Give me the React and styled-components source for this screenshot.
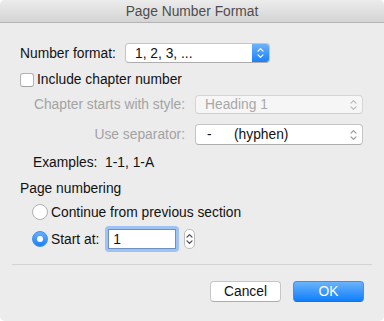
import React from "react";
import styled, { createGlobalStyle, css } from "styled-components";

const GlobalStyle = createGlobalStyle`
  html, body {
    margin: 0;
    padding: 0;
    background: #ffffff;
  }
  body {
    font-family: "Liberation Sans", Arial, sans-serif;
    font-size: 13.8px;
    color: #1a1a1a;
  }
`;

const Chevrons = ({ color = "#fff", size = 9 }) => (
  <svg width={size - 2} height={size + 3} viewBox="0 0 7 12" fill="none">
    <path d="M1 4.2 L3.5 1.7 L6 4.2" stroke={color} strokeWidth="1.2" strokeLinecap="round" strokeLinejoin="round" />
    <path d="M1 7.8 L3.5 10.3 L6 7.8" stroke={color} strokeWidth="1.2" strokeLinecap="round" strokeLinejoin="round" />
  </svg>
);

const App = () => {
  return (
    <>
      <GlobalStyle />
      <Window>
        <TitleBar>Page Number Format</TitleBar>
        <Content>
          <Row $top={20}>
            <Label $width={105}>Number format:</Label>
            <Popup $width={145}>
              <PopupText>1, 2, 3, ...</PopupText>
              <BlueArrows>
                <Chevrons />
              </BlueArrows>
            </Popup>
          </Row>

          <Row $top={9}>
            <Checkbox />
            <CheckLabel>Include chapter number</CheckLabel>
          </Row>

          <Row $top={8}>
            <Label $width={165} $right $disabled>Chapter starts with style:</Label>
            <Popup $width={168} $disabled $height={19}>
              <PopupText $disabled>Heading 1</PopupText>
              <PlainArrows>
                <Chevrons color="#b8b8b8" />
              </PlainArrows>
            </Popup>
          </Row>

          <Row $top={10}>
            <Label $width={165} $right $disabled>Use separator:</Label>
            <Popup $width={168} $height={21}>
              <PopupText>
                <Hyphen>-</Hyphen>(hyphen)
              </PopupText>
              <PlainArrows>
                <Chevrons color="#9a9a9a" />
              </PlainArrows>
            </Popup>
          </Row>

          <Examples>Examples:&nbsp;&nbsp;1-1, 1-A</Examples>

          <SectionTitle>Page numbering</SectionTitle>

          <RadioRow $top={7}>
            <Radio />
            <RadioLabel>Continue from previous section</RadioLabel>
          </RadioRow>

          <RadioRow $top={6}>
            <Radio $checked />
            <RadioLabel>Start at:</RadioLabel>
            <FocusRing>
              <NumberInput>1</NumberInput>
            </FocusRing>
            <Stepper>
              <Chevrons color="#444" />
            </Stepper>
          </RadioRow>
        </Content>

        <Divider />

        <Buttons>
          <Button>Cancel</Button>
          <Button $primary>OK</Button>
        </Buttons>
      </Window>
    </>
  );
};

export default App;

const Window = styled.div`
  width: 384px;
  height: 321px;
  box-sizing: border-box;
  background: #ececec;
  border-radius: 5px;
  overflow: hidden;
  display: flex;
  flex-direction: column;
`;

const TitleBar = styled.div`
  height: 21px;
  flex: none;
  border-bottom: 1px solid #b4b4b4;
  background: linear-gradient(#ececec, #d4d4d4);
  color: #4d4d4d;
  display: flex;
  align-items: center;
  justify-content: center;
  padding-top: 1px;
  box-sizing: content-box;
`;

const Content = styled.div`
  display: flex;
  flex-direction: column;
  padding: 0 20px;
`;

const Row = styled.div`
  display: flex;
  align-items: center;
  margin-top: ${(p) => p.$top}px;
`;

const Label = styled.div`
  width: ${(p) => p.$width}px;
  flex: none;
  box-sizing: border-box;
  white-space: nowrap;
  color: ${(p) => (p.$disabled ? "#a3a3a3" : "#111")};
  ${(p) =>
    p.$right &&
    css`
      text-align: right;
      padding-right: 10px;
      width: ${p.$width + 10}px;
    `}
`;

const Popup = styled.div`
  width: ${(p) => p.$width}px;
  height: ${(p) => p.$height || 20}px;
  box-sizing: border-box;
  display: flex;
  align-items: center;
  border-radius: 4px;
  border: 1px solid ${(p) => (p.$disabled ? "#d6d6d6" : "#c4c4c4")};
  border-bottom-color: ${(p) => (p.$disabled ? "#cfcfcf" : "#adadad")};
  background: ${(p) => (p.$disabled ? "#f6f6f6" : "#ffffff")};
  overflow: hidden;
`;

const PopupText = styled.div`
  flex: 1;
  padding-left: 9px;
  color: ${(p) => (p.$disabled ? "#a8a8a8" : "#111")};
  white-space: pre;
`;

const Hyphen = styled.span`
  display: inline-block;
  width: 27px;
  padding-left: 2px;
`;

const BlueArrows = styled.div`
  width: 17px;
  align-self: stretch;
  display: flex;
  align-items: center;
  justify-content: center;
  background: linear-gradient(#6db3fb, #1a80fa);
`;

const PlainArrows = styled.div`
  width: 17px;
  display: flex;
  align-items: center;
  justify-content: center;
`;

const Checkbox = styled.div`
  width: 14px;
  height: 14px;
  flex: none;
  box-sizing: border-box;
  border: 1px solid #b3b3b3;
  border-bottom-color: #a0a0a0;
  border-radius: 3px;
  background: #fff;
`;

const CheckLabel = styled.div`
  margin-left: 3px;
  color: #111;
`;

const Examples = styled.div`
  margin-top: 10px;
  margin-left: 13px;
  line-height: 16px;
  color: #111;
`;

const SectionTitle = styled.div`
  margin-top: 10px;
  line-height: 16px;
  color: #111;
`;

const RadioRow = styled(Row)`
  margin-left: 12px;
`;

const Radio = styled.div`
  width: 16px;
  height: 16px;
  box-sizing: border-box;
  border-radius: 50%;
  flex: none;
  display: flex;
  align-items: center;
  justify-content: center;
  ${(p) =>
    p.$checked
      ? css`
          background: linear-gradient(#69b1fb, #1c7ff7);
          border: 1px solid #3b8ff0;
          &::after {
            content: "";
            width: 6px;
            height: 6px;
            border-radius: 50%;
            background: #fff;
          }
        `
      : css`
          background: #fff;
          border: 1px solid #b0b0b0;
        `}
`;

const RadioLabel = styled.div`
  margin-left: 3px;
  color: #111;
`;

const FocusRing = styled.div`
  margin-left: 6px;
  width: 74px;
  height: 26px;
  box-sizing: border-box;
  border-radius: 4px;
  background: #9ec2f2;
  padding: 3px;
`;

const NumberInput = styled.div`
  width: 100%;
  height: 100%;
  box-sizing: border-box;
  background: #fff;
  border: 1px solid #6e8fbf;
  padding-left: 4px;
  display: flex;
  align-items: center;
  color: #111;
`;

const Stepper = styled.div`
  margin-left: 5px;
  width: 11px;
  height: 20px;
  box-sizing: border-box;
  border: 1px solid #bdbdbd;
  border-radius: 5px;
  background: #fff;
  display: flex;
  align-items: center;
  justify-content: center;
`;

const Divider = styled.div`
  margin: 12px 12px 0;
  height: 1px;
  background: #d3d3d3;
`;

const Buttons = styled.div`
  display: flex;
  justify-content: flex-end;
  gap: 12px;
  padding: 16px 20px 0;
`;

const Button = styled.div`
  width: 71px;
  height: 21px;
  box-sizing: border-box;
  border-radius: 4px;
  display: flex;
  align-items: center;
  justify-content: center;
  ${(p) =>
    p.$primary
      ? css`
          color: #fff;
          background: linear-gradient(#6cb3fa, #0f7ffb);
          border: 1px solid #3c8ff3;
          border-bottom-color: #1f6fd8;
        `
      : css`
          color: #111;
          background: #fff;
          border: 1px solid #c6c6c6;
          border-bottom-color: #acacac;
        `}
`;
